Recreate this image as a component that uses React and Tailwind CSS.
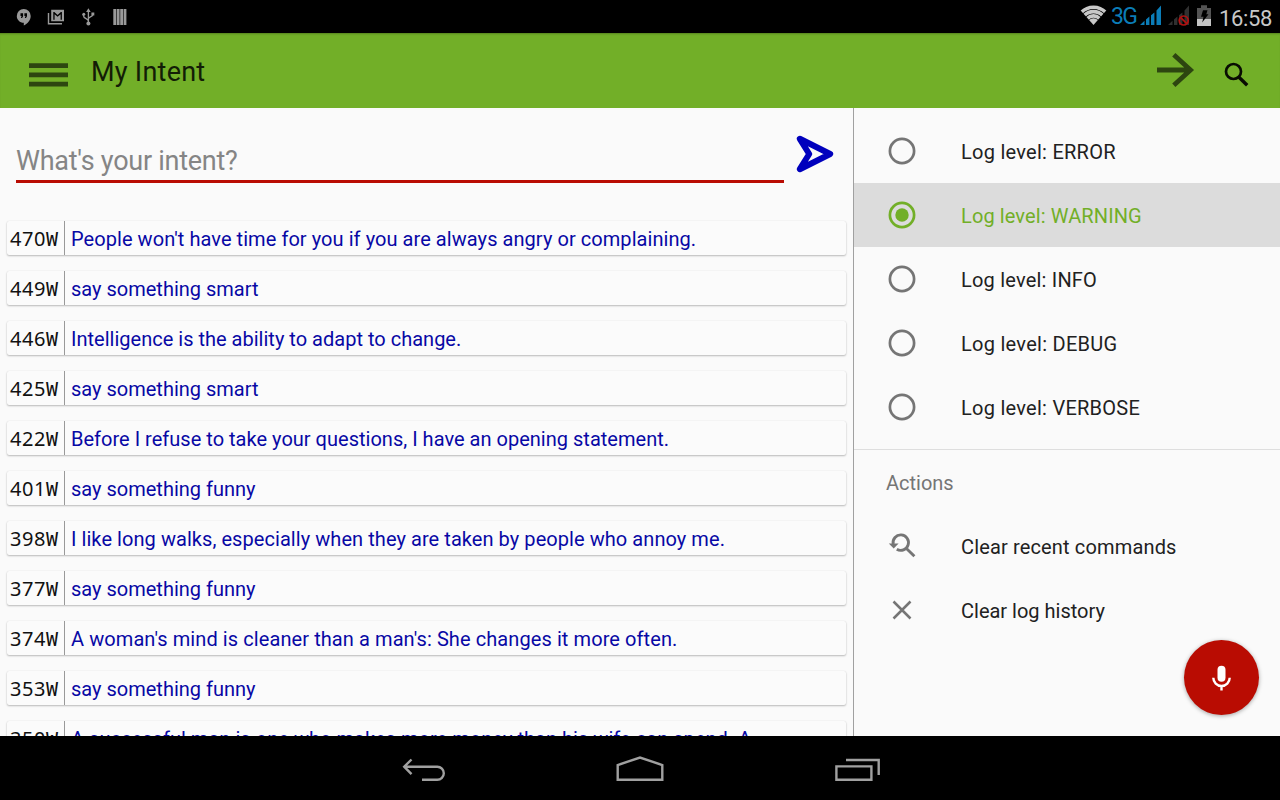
import React from "react";

const rows = [
  ["470", "People won't have time for you if you are always angry or complaining.", "tracking-[0.06px]"],
  ["449", "say something smart", "tracking-normal"],
  ["446", "Intelligence is the ability to adapt to change.", "tracking-[0.01px]"],
  ["425", "say something smart", "tracking-normal"],
  ["422", "Before I refuse to take your questions, I have an opening statement.", "tracking-[0.015px]"],
  ["401", "say something funny", "tracking-normal"],
  ["398", "I like long walks, especially when they are taken by people who annoy me.", "tracking-[0.062px]"],
  ["377", "say something funny", "tracking-normal"],
  ["374", "A woman's mind is cleaner than a man's: She changes it more often.", "tracking-[0.085px]"],
  ["353", "say something funny", "tracking-normal"],
  ["350", "A successful man is one who makes more money than his wife can spend. A", "tracking-[0.04px]"],
];

const levels = [
  ["ERROR", "tracking-[0.26px]"],
  ["WARNING", "tracking-[0.11px]"],
  ["INFO", "tracking-[0.2px]"],
  ["DEBUG", "tracking-[0.27px]"],
  ["VERBOSE", "tracking-[0.26px]"],
];

function StatusBar() {
  return (
    <header className="flex h-[33px] shrink-0 items-center bg-black">
      <svg className="h-[33px] w-[140px]" viewBox="0 0 140 33" fill="#999">
        <path d="M23.7 9a6.9 6.9 0 0 0-6.9 6.9c0 3.9 3 6.8 7 6.8v2.7c4-2 6.9-5.400 6.900-9.500A6.900 6.900 0 0 0 23.700 9z" />
        <path d="M20.500 13.300h2.600v2.900l-1 1.800h-1.200l.7-1.900h-1.100zM24.400 13.300H27v2.900l-1 1.800h-1.200l.7-1.900h-1.100z" fill="#000" />
        <path d="M48.500 13v10.800H62" fill="none" stroke="#999" strokeWidth="1.400" />
        <path fillRule="evenodd" d="M51.200 9.800h12.800v11.400H51.200zM53.300 12v7.800h1.300v-5.600l3 2.600 3-2.600v5.600h1.300V12h-1l-3.300 2.900L54.300 12z" />
        <path d="M88.400 11v12M88.400 21.200c0-3-5-2.200-5-5.700v-1M88.400 19c0-2.600 4.400-1.600 4.400-4.800" fill="none" stroke="#999" strokeWidth="1.300" />
        <path d="M88.400 8.300l2.300 3.600h-4.600zM91.400 12.500h2.900v2.900h-2.900z" />
        <circle cx="83.800" cy="14.200" r="1.500" />
        <circle cx="88.400" cy="23.400" r="2" />
        <path d="M113.300 9h2.900v16h-2.900zM116.800 9h2.800v16h-2.800zM120.200 9h2.800v16h-2.800zM123.600 9h2.800v16h-2.800z" />
      </svg>
      <svg className="ml-auto h-[33px] w-[31px]" viewBox="1080 0 31 33">
        <clipPath id="wifi"><path d="M1093.500 25L1079 8.500V3h29v5.500z" /></clipPath>
        <g clipPath="url(#wifi)" fill="none" stroke="#c8c8c8" strokeWidth="3.600">
          <circle cx="1093.500" cy="24.500" r="17.200" />
          <circle cx="1093.500" cy="24.500" r="12.900" />
          <circle cx="1093.500" cy="24.500" r="8.600" />
          <circle cx="1093.500" cy="24.500" r="3.100" strokeWidth="6.200" />
        </g>
      </svg>
      <span className="w-[28px] whitespace-nowrap font-['Roboto',sans-serif] text-[23px] leading-[33px] tracking-[-1.6px] text-[#0b7db8]">3G</span>
      <svg className="h-[33px] w-[80px]" viewBox="1139 0 80 33">
        <g fill="#0b7db8">
          <path d="M1140 25l4.500-4.200V25zM1146 19.600l3.400-3.200V25h-3.400zM1151 15.200l3.400-2.800V25h-3.400zM1156.500 10.400l4.500-5V25h-4.500z" />
        </g>
        <g fill="#303030">
          <path d="M1168 25l4.500-4.200V25zM1174 19.600l3.400-3.200V25h-3.400zM1179 15.200l3.400-2.800V25h-3.400zM1184.500 10.400l4.500-5V25h-4.500z" />
        </g>
        <circle cx="1183.700" cy="20.500" r="4.500" fill="none" stroke="#b41010" strokeWidth="1.700" />
        <path d="M1180.500 17.300l6.400 6.400" stroke="#b41010" strokeWidth="1.700" />
        <path d="M1201 5.300h6V8h4v18h-14V8h4z" fill="#545454" />
        <path d="M1197 19h14v7h-14z" fill="#c4c4c4" />
        <path d="M1203 10.300h4.500l-1.200 4h2.200l-6.300 8.300 1.300-5.800h-2.500z" fill="#000" />
      </svg>
      <span className="w-[61px] whitespace-nowrap pt-[3px] font-['Roboto',sans-serif] text-[22px] leading-[33px] tracking-[-0.35px] text-[#c8c8c8]">16:58</span>
    </header>
  );
}

function AppBar() {
  return (
    <div className="flex h-[75px] shrink-0 items-center bg-[#72af28] shadow-[inset_0_2px_2px_-1px_rgba(0,0,0,0.25)]">
      <svg className="ml-[29px] h-[75px] w-[39px]" viewBox="29 33 39 75" fill="#2d4610">
        <path d="M29 63.200h39V68H29zM29 72.500h39v4.800H29zM29 81.700h39v4.800H29z" />
      </svg>
      <h1 className="ml-[23px] pt-[4px] font-['Roboto',sans-serif] text-[27px] leading-[71px] tracking-[0.25px] text-[#131d06]">My Intent</h1>
      <svg className="ml-auto h-[75px] w-[100px]" viewBox="1157 33 100 75" fill="none">
        <path d="M1157 70h33M1173.800 54.800L1190.500 70l-16.700 15.200" stroke="#2d4610" strokeWidth="4.800" />
        <circle cx="1233.500" cy="71.500" r="7.500" stroke="#080c02" strokeWidth="2.700" />
        <path d="M1239 77.200l8.200 8" stroke="#080c02" strokeWidth="3.400" />
      </svg>
      <span className="w-[23px]" />
    </div>
  );
}

function LogRow({ id, text, tracking }) {
  return (
    <li className="flex h-[34px] shrink-0 rounded-[2px] bg-[#fbfbfb] shadow-[0_1px_2px_rgba(0,0,0,0.25),0_0_1px_rgba(0,0,0,0.12)]">
      <span className="flex w-[58px] border-r border-[#999] pl-[3px] font-['Noto_Sans',sans-serif] text-[20px] leading-[35px] tracking-[0.56px] text-[#111]">
        {id}
        <span className="font-['DejaVu_Sans_Mono',monospace] leading-[36px] tracking-normal">W</span>
      </span>
      <span className={"whitespace-nowrap pl-[6px] font-['Roboto',sans-serif] text-[20px] leading-[36px] text-[#0808a5] " + tracking}>{text}</span>
    </li>
  );
}

function MenuRow({ icon, label, selected, tracking }) {
  return (
    <div className={selected ? "flex h-16 items-center bg-[#dcdcdc] text-[#72af28]" : "flex h-16 items-center text-[#212121]"}>
      <svg className="ml-8 h-8 w-8 shrink-0" viewBox="0 0 32 32" fill="none">{icon}</svg>
      <span className={"ml-[43px] whitespace-nowrap pt-[2px] font-['Roboto',sans-serif] text-[20px] leading-[62px] " + tracking}>{label}</span>
    </div>
  );
}

function Radio({ on }) {
  return (
    <>
      <circle cx="16" cy="16" r="12.100" stroke={on ? "#72af28" : "#757575"} strokeWidth="2.700" />
      {on && <circle cx="16" cy="16" r="6.700" fill="#72af28" />}
    </>
  );
}

function SidePanel() {
  return (
    <aside className="relative flex flex-1 flex-col border-l border-[#a0a0a0] bg-[#fafafa] pt-[11px]">
      {levels.map(([name, tracking]) => (
        <MenuRow key={name} label={"Log level: " + name} tracking={tracking} selected={name === "WARNING"} icon={<Radio on={name === "WARNING"} />} />
      ))}
      <div className="mt-[10px] h-px bg-[#dedede]" />
      <h2 className="h-[64px] pl-8 font-['Roboto',sans-serif] text-[20px] leading-[67px] text-[#757575]">Actions</h2>
      <MenuRow
        label="Clear recent commands"
        tracking="tracking-[0.15px]"
        icon={
          <>
            <path d="M7.200 14A7.700 7.700 0 1 1 10.800 19.200M20.200 18.200l8.200 8" stroke="#757575" strokeWidth="2.900" />
            <path d="M2.800 13.500h9.800l-4.900 5z" fill="#757575" />
          </>
        }
      />
      <MenuRow label="Clear log history" tracking="tracking-normal" icon={<path d="M7.500 7.500l17 17M24.500 7.500l-17 17" stroke="#757575" strokeWidth="2.500" />} />
      <button className="absolute bottom-[21px] right-[21px] flex size-[75px] items-center justify-center rounded-full bg-[#b90c02] shadow-[0_1px_4px_rgba(0,0,0,0.35)]">
        <svg className="size-[75px]" viewBox="0 0 75 75" fill="none">
          <rect x="33.500" y="25.800" width="8" height="16" rx="4" fill="#fff" />
          <path d="M29.300 37.800a8.200 8.200 0 0 0 16.400 0M37.500 46v4.500" stroke="#fff" strokeWidth="2.400" />
        </svg>
      </button>
    </aside>
  );
}

function NavBar() {
  return (
    <footer className="flex h-16 shrink-0 items-center justify-center bg-black">
      <svg className="h-16 w-[480px]" viewBox="400 736 480 64" fill="none" stroke="#a0a0a0" strokeWidth="2.400">
        <path d="M404 766.700h33.300a6.500 6.500 0 0 1 0 13H422M411.500 759.500l-7.300 7.200 7.300 7.500" />
        <path d="M617.700 779.800V765l22.300-7.500 22.300 7.500v14.800z" />
        <path d="M836.400 766.400h35v13.400h-35zM846 760h32.700v15" />
      </svg>
    </footer>
  );
}

export default function App() {
  return (
    <div className="flex h-[800px] w-[1280px] flex-col overflow-hidden bg-black">
      <StatusBar />
      <AppBar />
      <main className="flex h-[628px] shrink-0 overflow-hidden">
        <section className="flex w-[853px] flex-col bg-[#fafafa]">
          <div className="flex h-[113px] shrink-0 pl-4">
            <div className="mt-[30px] flex h-[45px] w-[768px] items-end border-b-[3px] border-[#b90c02] font-['Roboto',sans-serif] text-[27px] leading-[38px] tracking-[-0.26px] text-[#858585]">
              What's your intent?
            </div>
            <svg className="ml-[12px] mt-[27px] h-10 w-10" viewBox="796 135 40 40" fill="none">
              <path d="M799.800 138.800l30.400 15.200-30.400 15.200 9.400-15.200z" stroke="#0000bd" strokeWidth="6" strokeLinejoin="round" />
            </svg>
          </div>
          <ul className="flex flex-col gap-4 pl-[7px] pr-[7px]">
            {rows.map(([id, text, tracking]) => <LogRow key={id} id={id} text={text} tracking={tracking} />)}
          </ul>
        </section>
        <SidePanel />
      </main>
      <NavBar />
    </div>
  );
}
